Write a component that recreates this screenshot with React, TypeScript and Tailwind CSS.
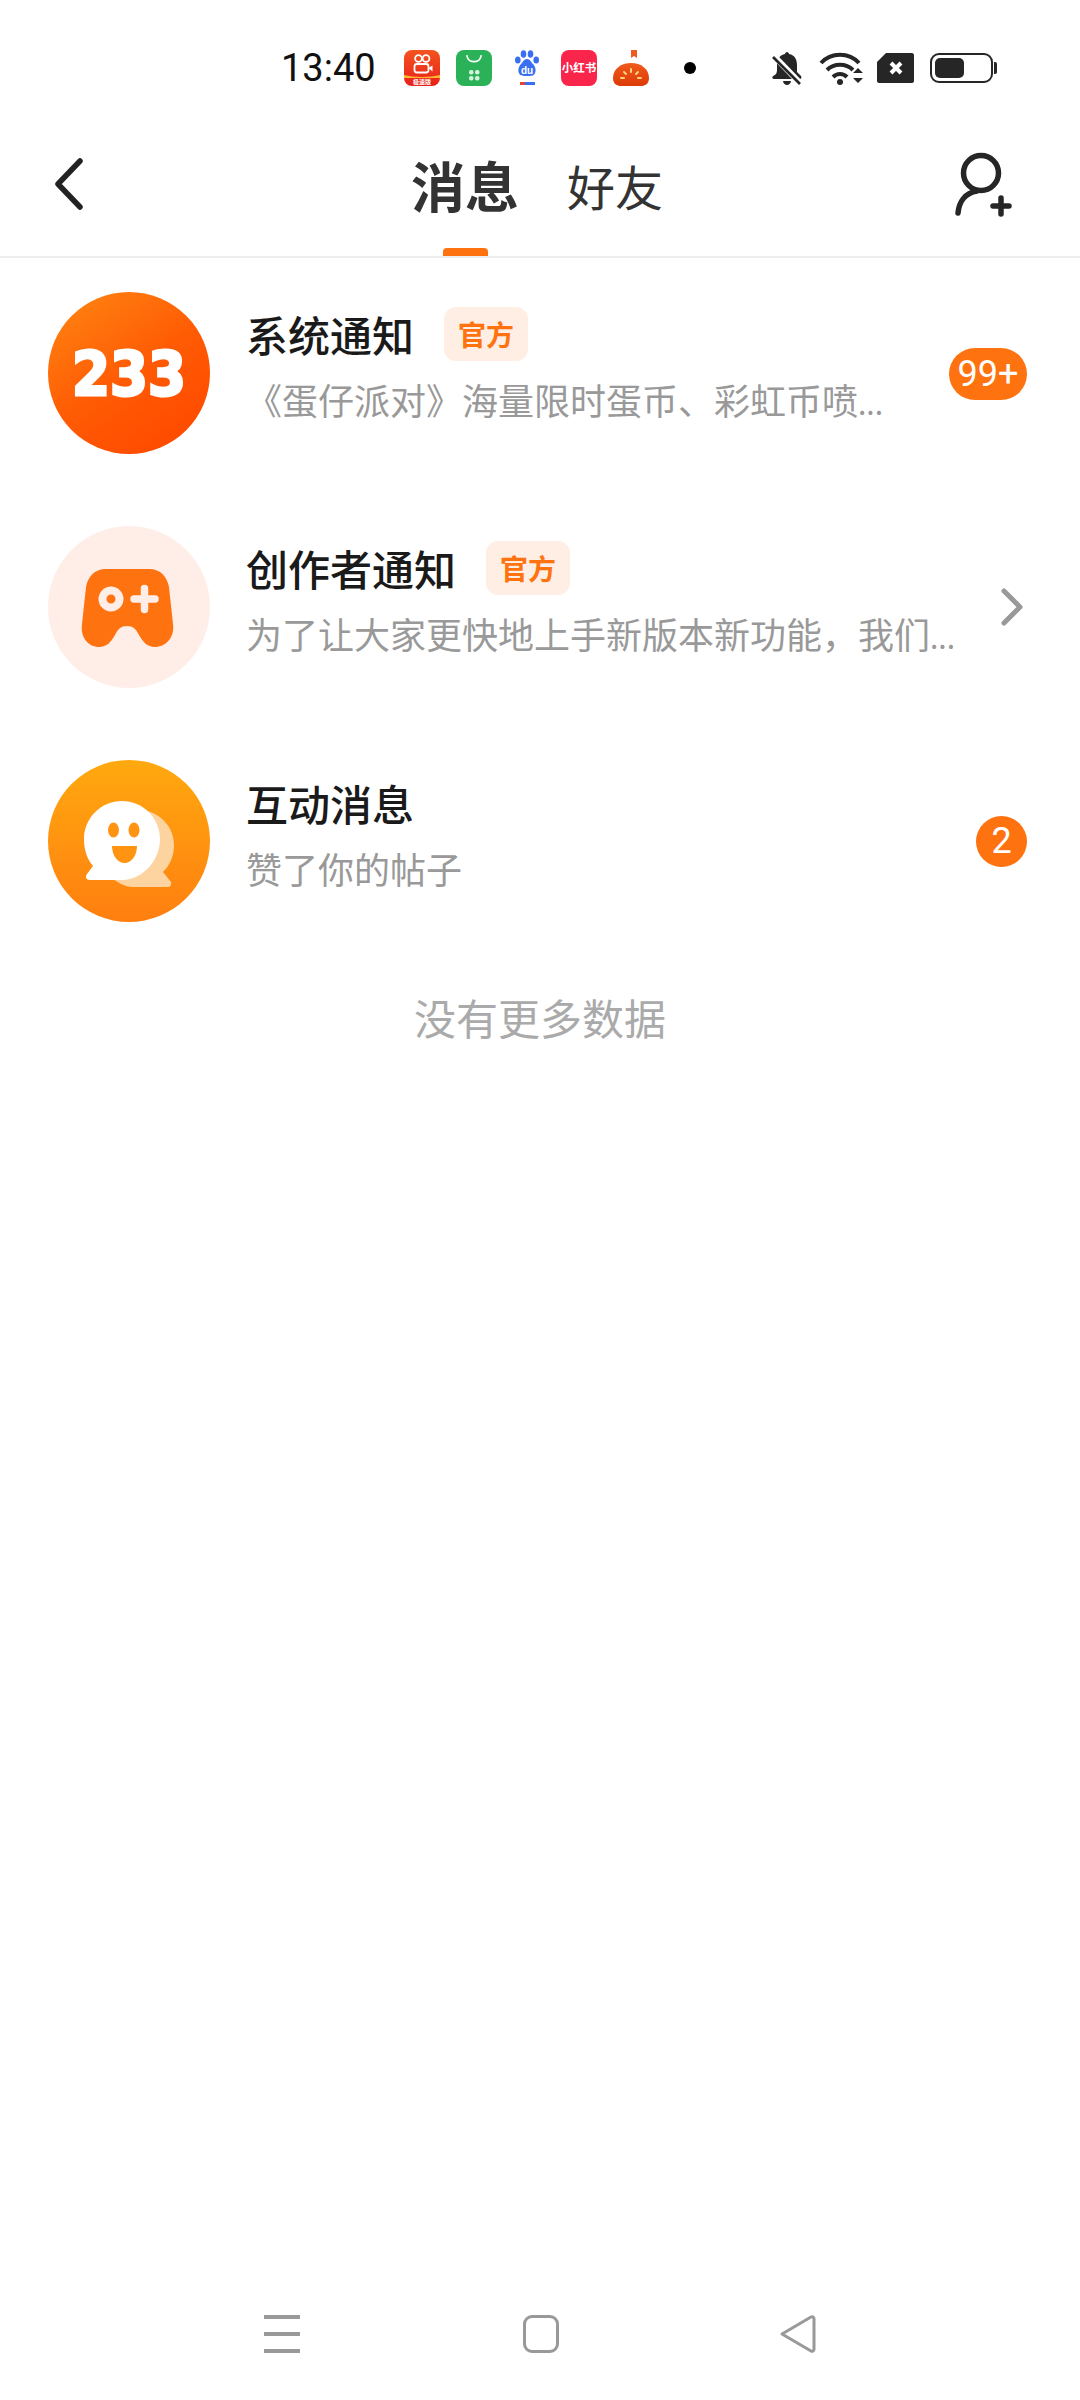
import React from "react";

const CJK = "font-['Noto_Sans_CJK_SC','Noto_Sans',sans-serif]";

function KuaishouIcon() {
  return (
    <svg width="36" height="36" viewBox="0 0 36 36">
      <defs>
        <linearGradient id="ks" x1="0" y1="0" x2="0" y2="1">
          <stop offset="0" stopColor="#f4541f" />
          <stop offset="1" stopColor="#e8201a" />
        </linearGradient>
      </defs>
      <rect width="36" height="36" rx="8" fill="url(#ks)" />
      <g fill="none" stroke="#fff" strokeWidth="1.8">
        <circle cx="14.5" cy="8.5" r="3.4" />
        <circle cx="22" cy="8.5" r="3.4" />
        <rect x="10.5" y="14" width="14" height="8.5" rx="2.5" />
      </g>
      <path d="M24.5 18l4-2.5v6z" fill="#fff" />
      <path d="M0 25c10 2.500 26 2.500 36 0v3H0z" fill="#ffb52e" />
      <text x="18" y="34" textAnchor="middle" fontSize="6" fontWeight="700" fill="#fff" fontFamily="Noto Sans CJK SC">极速版</text>
    </svg>
  );
}

function StoreIcon() {
  return (
    <svg width="36" height="36" viewBox="0 0 36 36">
      <rect width="36" height="36" rx="8" fill="#2bb157" />
      <path d="M11 6c1 7.500 13 7.500 14 0" fill="none" stroke="#fff" strokeWidth="1.8" strokeLinecap="round" />
      <g fill="#d6f3df">
        <rect x="13" y="20" width="4.500" height="4.500" rx="2" />
        <rect x="19" y="20" width="4.500" height="4.500" rx="2" />
        <rect x="13" y="26" width="4.500" height="4.500" rx="2" />
        <rect x="19" y="26" width="4.500" height="4.500" rx="2" />
      </g>
    </svg>
  );
}

function BaiduIcon() {
  return (
    <svg width="24" height="36" viewBox="0 0 24 36">
      <g fill="#3a6ff2">
        <ellipse cx="2.800" cy="10" rx="2.800" ry="3.600" />
        <ellipse cx="8.500" cy="4" rx="2.800" ry="3.800" />
        <ellipse cx="15.500" cy="4" rx="2.800" ry="3.800" />
        <ellipse cx="21.200" cy="10" rx="2.800" ry="3.600" />
        <path d="M12 9c3 0 4 3 6 5 3 3 3 7 2 9-1 3-4 3-8 3s-7 0-8-3c-1-2-1-6 2-9 2-2 3-5 6-5z" />
      </g>
      <text x="12" y="24" textAnchor="middle" fontSize="10" fontWeight="700" fill="#fff" fontFamily="Liberation Sans">du</text>
      <rect x="5" y="32" width="5" height="3" fill="#e8433a" />
      <rect x="10" y="32" width="5" height="3" fill="#3a6ff2" />
      <rect x="15" y="32" width="5" height="3" fill="#3a6ff2" />
    </svg>
  );
}

function XhsIcon() {
  return (
    <div className={`flex h-[36px] w-[36px] items-center justify-center rounded-[8px] bg-[#f9254a] text-[11.5px] font-bold leading-none text-white ${CJK}`}>
      小红书
    </div>
  );
}

function TomatoIcon() {
  return (
    <svg width="36" height="36" viewBox="0 0 36 36">
      <defs>
        <linearGradient id="tm" x1="0" y1="0" x2="0" y2="1">
          <stop offset="0" stopColor="#f05a1c" />
          <stop offset="1" stopColor="#dc3b08" />
        </linearGradient>
      </defs>
      <path d="M24 0h-6v8l3-2 3 2z" fill="#ef5a20" />
      <path d="M18 13c10 0 18 6 18 15 0 6-4 8-8 8H8c-4 0-8-2-8-8 0-9 8-15 18-15z" fill="url(#tm)" />
      <g stroke="#ffd27a" strokeWidth="2" strokeLinecap="round">
        <path d="M18 19v3" />
        <path d="M11 22l2 2" />
        <path d="M25 22l-2 2" />
        <path d="M8 28h3" />
        <path d="M25 28h3" />
      </g>
    </svg>
  );
}

function BellOff() {
  return (
    <svg width="30" height="33" viewBox="0 0 30 33">
      <path d="M15 0c1 0 2 1 2 2 6 1 8 6 8 11v7l4 4c1 1 0 3-1 3H2c-2 0-2-2-1-3 3-1 4-3 4-6v-6C5 7 8 3 13 2c0-1 1-2 2-2z" fill="#262626" />
      <path d="M11 29h8c0 2-2 4-4 4s-4-2-4-4z" fill="#262626" />
      <path d="M2 4l26 27" stroke="#fff" strokeWidth="6" />
      <path d="M1 5l27 27" stroke="#262626" strokeWidth="2.600" />
    </svg>
  );
}

function WifiIcon() {
  return (
    <svg width="44" height="33" viewBox="0 0 44 33">
      <g fill="none" stroke="#262626" strokeWidth="4">
        <path d="M2 11c10-11 28-11 38 0" />
        <path d="M8 18c7-7 19-7 26 0" />
        <path d="M14 25c4-4 10-4 14 0" />
      </g>
      <circle cx="21" cy="30" r="3" fill="#262626" />
      <path d="M34 21l5-5 5 5zM34 26h10l-5 5z" fill="#262626" />
    </svg>
  );
}

function SimIcon() {
  return (
    <svg width="37" height="30" viewBox="0 0 37 30">
      <path d="M9 0h26c1 0 2 1 2 2v26c0 1-1 2-2 2H2c-1 0-2-1-2-2V9z" fill="#262626" />
      <path d="M14 10l10 10M24 10L14 20" stroke="#fff" strokeWidth="4" />
    </svg>
  );
}

function BatteryIcon() {
  return (
    <div className="flex items-center gap-[1px]">
      <div className="h-[30px] w-[63px] rounded-[9px] border-[2px] border-[#262626] p-[3px]">
        <div className="h-full w-[29px] rounded-[5px] bg-[#262626]" />
      </div>
      <div className="h-[12px] w-[3px] rounded-r-[2px] bg-[#262626]" />
    </div>
  );
}

function StatusBar() {
  return (
    <div className="flex h-[128px] items-start pt-[50px]">
      <span className="ml-[281px] w-[123px] font-['Roboto',sans-serif] text-[38px] leading-[36px] text-[#111]">13:40</span>
      <div className="flex h-[36px] items-center">
        <KuaishouIcon />
        <div className="ml-[16px]"><StoreIcon /></div>
        <div className="ml-[23px]"><BaiduIcon /></div>
        <div className="ml-[22px]"><XhsIcon /></div>
        <div className="ml-[16px]"><TomatoIcon /></div>
        <div className="ml-[35px] h-[12px] w-[12px] rounded-full bg-black" />
      </div>
      <div className="ml-[76px] flex h-[36px] items-center">
        <BellOff />
        <div className="ml-[17px]"><WifiIcon /></div>
        <div className="ml-[14px]"><SimIcon /></div>
        <div className="ml-[16px]"><BatteryIcon /></div>
      </div>
    </div>
  );
}

function Header() {
  return (
    <div className={`flex h-[130px] items-start border-b-[2px] border-[#eeeeee] ${CJK}`}>
      <svg className="ml-[54px] mt-[30px]" width="30" height="52" viewBox="0 0 30 52" fill="none">
        <path d="M26 3L4 26l22 23" stroke="#222" strokeWidth="5.500" strokeLinecap="round" strokeLinejoin="round" />
      </svg>
      <div className="ml-[327px] flex h-[128px] w-[108px] flex-col items-center justify-between pt-[22px]">
        <span className="text-[54px] font-bold leading-[70px] text-[#333]">消息</span>
        <div className="h-[8px] w-[45px] rounded-t-[4px] bg-[#ff7210]" />
      </div>
      <span className="ml-[48px] mt-[24px] text-[48px] leading-[66px] text-[#333]">好友</span>
      <svg className="ml-[292px] mt-[24px]" width="60" height="66" viewBox="0 0 60 66" fill="none">
        <circle cx="26" cy="21" r="17.500" stroke="#262626" strokeWidth="5.500" />
        <path d="M22 39C10 41 4 50 3 61" stroke="#262626" strokeWidth="5.500" strokeLinecap="round" />
        <path d="M38 54h16M46 46v16" stroke="#262626" strokeWidth="5.500" strokeLinecap="round" />
      </svg>
    </div>
  );
}

function Logo233() {
  return (
    <svg width="162" height="162" viewBox="0 0 162 162" className="shrink-0">
      <defs>
        <linearGradient id="g233" x1="0.15" y1="0.1" x2="0.7" y2="0.9">
          <stop offset="0" stopColor="#ff7d0f" />
          <stop offset="0.55" stopColor="#ff5b04" />
          <stop offset="1" stopColor="#ff4d00" />
        </linearGradient>
      </defs>
      <circle cx="81" cy="81" r="81" fill="url(#g233)" />
      <text
        x="24"
        y="103"
        fontSize="60"
        fontWeight="700"
        fontFamily="DejaVu Sans, sans-serif"
        fill="#fff"
        stroke="#fff"
        strokeWidth="3"
        textLength="114"
        lengthAdjust="spacingAndGlyphs"
      >
        233
      </text>
    </svg>
  );
}

function GameAvatar() {
  return (
    <svg width="162" height="162" viewBox="0 0 162 162" className="shrink-0">
      <circle cx="81" cy="81" r="81" fill="#ffeee8" />
      <path
        d="M58 43H101C113 43 119 51 121 61L125 98C127 112 117 121 107 121C99 121 95 116 91 109C88 103 85 100 79 100C73 100 70 103 67 109C63 116 59 121 51 121C41 121 32 112 34 98L38 61C40 51 46 43 58 43Z"
        fill="#ff7210"
      />
      <circle cx="63" cy="73" r="8.500" fill="#ff7210" stroke="#ffeee8" strokeWidth="8" />
      <path d="M86 73h21M96.500 62.500v21" stroke="#ffeee8" strokeWidth="7.500" strokeLinecap="round" />
    </svg>
  );
}

function ChatAvatar() {
  return (
    <svg width="162" height="162" viewBox="0 0 162 162" className="shrink-0">
      <defs>
        <linearGradient id="gchat" x1="0.5" y1="0" x2="0.5" y2="1">
          <stop offset="0" stopColor="#ffa90f" />
          <stop offset="1" stopColor="#ff7f10" />
        </linearGradient>
      </defs>
      <circle cx="81" cy="81" r="81" fill="url(#gchat)" />
      <path
        d="M96 50C114 54 126 68 126 85C126 96 122 105 115 112L123 122C124 125 122 127 119 127H86C76 127 68 122 62 116Z"
        fill="#fdd3a0"
      />
      <path
        d="M74 41C95 41 112 58 112 79C112 100 95 120 74 120H42C38 120 37 117 39 114L45 106C39 99 36 90 36 79C36 58 53 41 74 41Z"
        fill="#fff"
      />
      <ellipse cx="65.500" cy="70" rx="5.500" ry="7.500" fill="#ff9412" />
      <ellipse cx="86" cy="70" rx="5.500" ry="7.500" fill="#ff9412" />
      <path d="M64 86H89C89 96 83 103 76.500 103C70 103 64 96 64 86Z" fill="#ff9412" />
    </svg>
  );
}

function OfficialTag() {
  return (
    <span className="ml-[30px] flex h-[54px] w-[84px] items-center justify-center rounded-[12px] bg-[#ffeee3] text-[28px] font-semibold leading-none text-[#ff7210]">
      官方
    </span>
  );
}

type Row = {
  avatar: React.ReactNode;
  title: string;
  desc: string;
  truncated?: boolean;
  official?: boolean;
  trailing: React.ReactNode;
};

const rows: Row[] = [
  {
    avatar: <Logo233 />,
    title: "系统通知",
    desc: "《蛋仔派对》海量限时蛋币、彩虹币喷",
    truncated: true,
    official: true,
    trailing: (
      <span className="mt-[2px] flex h-[52px] w-[78px] items-center justify-center rounded-full bg-[#ff7210] font-['Roboto',sans-serif] text-[36px] leading-none text-white">
        99+
      </span>
    ),
  },
  {
    avatar: <GameAvatar />,
    title: "创作者通知",
    desc: "为了让大家更快地上手新版本新功能，我们",
    truncated: true,
    official: true,
    trailing: (
      <svg className="mr-[4px]" width="22" height="38" viewBox="0 0 22 38" fill="none">
        <path d="M3 3l16 16L3 35" stroke="#999" strokeWidth="5" strokeLinecap="round" strokeLinejoin="round" />
      </svg>
    ),
  },
  {
    avatar: <ChatAvatar />,
    title: "互动消息",
    desc: "赞了你的帖子",
    trailing: (
      <span className="flex h-[51px] w-[51px] items-center justify-center rounded-full bg-[#ff7210] font-['Roboto',sans-serif] text-[36px] leading-none text-white">
        2
      </span>
    ),
  },
];

function MessageRow({ row }: { row: Row }) {
  return (
    <div className="flex h-[230px] items-center pl-[48px] pr-[53px]">
      {row.avatar}
      <div className={`ml-[36px] min-w-0 flex-1 pb-[14px] ${CJK}`}>
        <div className="flex h-[56px] items-center">
          <span className="text-[42px] font-medium leading-[56px] text-[#1a1a1a]">{row.title}</span>
          {row.official && <OfficialTag />}
        </div>
        <div className="mt-[12px] whitespace-nowrap text-[36px] leading-[50px] text-[#999999]">
          {row.desc}
          {row.truncated && <span className="text-[30px]">...</span>}
        </div>
      </div>
      {row.trailing}
    </div>
  );
}

function NavBar() {
  return (
    <div className="flex h-[96px] items-center pl-[264px]">
      <div className="flex h-[38px] w-[36px] flex-col justify-between">
        <div className="h-[4px] bg-[#999]" />
        <div className="h-[4px] bg-[#999]" />
        <div className="h-[4px] bg-[#999]" />
      </div>
      <div className="ml-[223px] h-[38px] w-[36px] rounded-[9px] border-[3px] border-[#999]" />
      <svg className="ml-[220px]" width="38" height="40" viewBox="0 0 38 40" fill="none">
        <path d="M3 20L32 3c1.500-.8 3 0 3 2v30c0 2-1.500 2.800-3 2z" stroke="#999" strokeWidth="3" strokeLinejoin="round" />
      </svg>
    </div>
  );
}

export default function App() {
  return (
    <div className="flex h-[2400px] w-[1080px] flex-col bg-white">
      <StatusBar />
      <Header />
      <div className="flex flex-col gap-[4px]">
        {rows.map((row) => (
          <MessageRow key={row.title} row={row} />
        ))}
      </div>
      <div className={`mt-[33px] text-center text-[42px] leading-[56px] text-[#aaaaaa] ${CJK}`}>没有更多数据</div>
      <div className="flex-1" />
      <NavBar />
      <div className="h-[18px]" />
    </div>
  );
}
